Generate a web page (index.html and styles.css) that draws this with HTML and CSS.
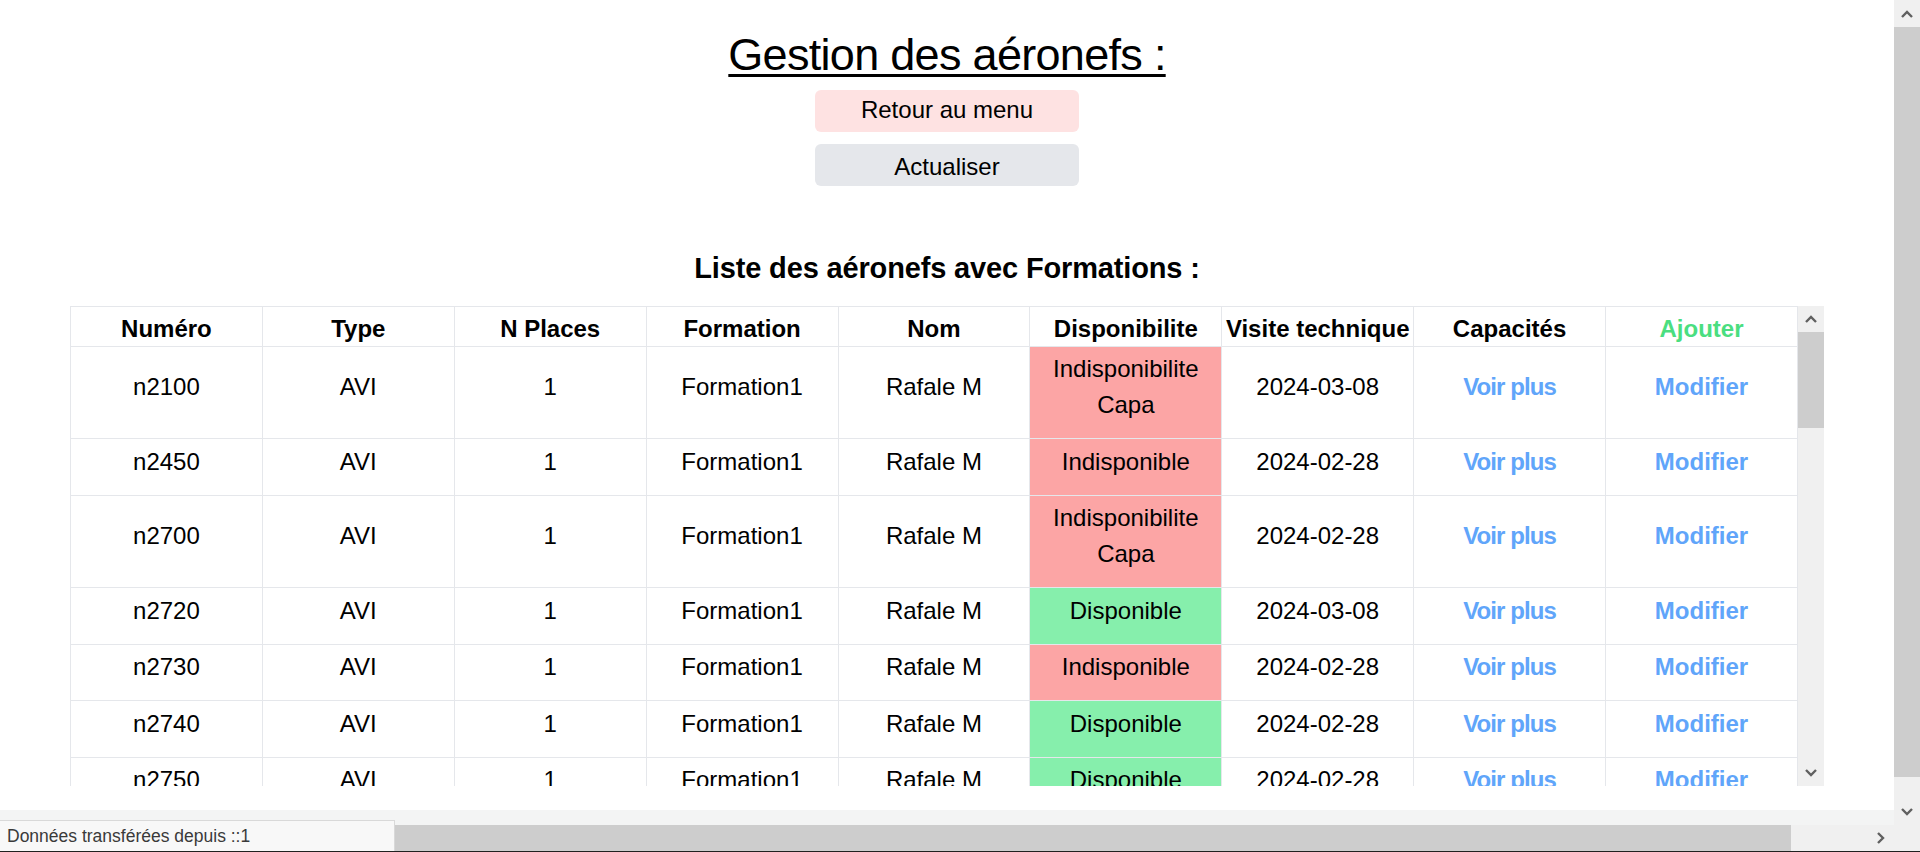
FILE: index.html
```html
<!DOCTYPE html>
<html lang="fr">
<head>
<meta charset="utf-8">
<title>Gestion des aéronefs</title>
<link rel="stylesheet" href="styles.css">
</head>
<body>
<div class="screen">
  <main class="viewport">
    <div class="page">
      <h1 class="title">Gestion des aéronefs :</h1>
      <div class="actions">
        <button class="btn btn-back" type="button">Retour au menu</button>
        <button class="btn btn-refresh" type="button">Actualiser</button>
      </div>
      <h2 class="subtitle">Liste des aéronefs avec Formations :</h2>
      <div class="table-frame">
        <div class="table-clip">
          <table class="grid">
            <thead>
              <tr>
                <th>Numéro</th><th>Type</th><th>N Places</th><th>Formation</th><th>Nom</th><th>Disponibilite</th><th>Visite technique</th><th>Capacités</th><th class="add">Ajouter</th>
              </tr>
            </thead>
            <tbody>
              <tr>
                <td>n2100</td><td>AVI</td><td>1</td><td>Formation1</td><td>Rafale M</td><td class="off">Indisponibilite Capa</td><td>2024-03-08</td><td class="link more">Voir plus</td><td class="link">Modifier</td>
              </tr>
              <tr>
                <td>n2450</td><td>AVI</td><td>1</td><td>Formation1</td><td>Rafale M</td><td class="off">Indisponible</td><td>2024-02-28</td><td class="link more">Voir plus</td><td class="link">Modifier</td>
              </tr>
              <tr>
                <td>n2700</td><td>AVI</td><td>1</td><td>Formation1</td><td>Rafale M</td><td class="off">Indisponibilite Capa</td><td>2024-02-28</td><td class="link more">Voir plus</td><td class="link">Modifier</td>
              </tr>
              <tr>
                <td>n2720</td><td>AVI</td><td>1</td><td>Formation1</td><td>Rafale M</td><td class="on">Disponible</td><td>2024-03-08</td><td class="link more">Voir plus</td><td class="link">Modifier</td>
              </tr>
              <tr>
                <td>n2730</td><td>AVI</td><td>1</td><td>Formation1</td><td>Rafale M</td><td class="off">Indisponible</td><td>2024-02-28</td><td class="link more">Voir plus</td><td class="link">Modifier</td>
              </tr>
              <tr>
                <td>n2740</td><td>AVI</td><td>1</td><td>Formation1</td><td>Rafale M</td><td class="on">Disponible</td><td>2024-02-28</td><td class="link more">Voir plus</td><td class="link">Modifier</td>
              </tr>
              <tr>
                <td>n2750</td><td>AVI</td><td>1</td><td>Formation1</td><td>Rafale M</td><td class="on">Disponible</td><td>2024-02-28</td><td class="link more">Voir plus</td><td class="link">Modifier</td>
              </tr>
            </tbody>
          </table>
        </div>
        <div class="vscroll vscroll-table">
          <div class="sb-btn"><svg width="12" height="8" viewBox="0 0 12 8"><path d="M1 7L6 2l5 5" fill="none" stroke="#606060" stroke-width="2.4"/></svg></div>
          <div class="sb-thumb thumb-table"></div>
          <div class="sb-track"></div>
          <div class="sb-btn"><svg width="12" height="8" viewBox="0 0 12 8"><path d="M1 1l5 5 5-5" fill="none" stroke="#606060" stroke-width="2.4"/></svg></div>
        </div>
      </div>
    </div>
    <div class="band"></div>
  </main>
  <div class="vscroll vscroll-page">
    <div class="sb-btn page-btn"><svg width="12" height="8" viewBox="0 0 12 8"><path d="M1 7L6 2l5 5" fill="none" stroke="#606060" stroke-width="2.4"/></svg></div>
    <div class="sb-thumb thumb-page"></div>
    <div class="sb-track"></div>
    <div class="sb-btn page-btn"><svg width="12" height="8" viewBox="0 0 12 8"><path d="M1 1l5 5 5-5" fill="none" stroke="#606060" stroke-width="2.4"/></svg></div>
  </div>
  <div class="hscroll">
    <div class="hsb-btn"><svg width="8" height="12" viewBox="0 0 8 12"><path d="M7 1L2 6l5 5" fill="none" stroke="#606060" stroke-width="2.4"/></svg></div>
    <div class="hsb-thumb"></div>
    <div class="hsb-track"></div>
    <div class="hsb-btn"><svg width="8" height="12" viewBox="0 0 8 12"><path d="M1 1l5 5-5 5" fill="none" stroke="#606060" stroke-width="2.4"/></svg></div>
  </div>
  <div class="corner"></div>
  <div class="bottom-line"></div>
</div>
<div class="status">Données transférées depuis ::1</div>
</body>
</html>
```

FILE: styles.css
```css
* { box-sizing: border-box; }

html, body {
  margin: 0;
  padding: 0;
  width: 1920px;
  height: 852px;
  overflow: hidden;
  background: #ffffff;
  font-family: "Liberation Sans", Arial, sans-serif;
  color: #000000;
}

.screen {
  display: grid;
  grid-template-columns: 1894px 26px;
  grid-template-rows: 825px 26px 1px;
  width: 1920px;
  height: 852px;
}

.viewport {
  grid-column: 1;
  grid-row: 1;
  display: flex;
  flex-direction: column;
  overflow: hidden;
  background: #ffffff;
}

.page {
  flex: 1;
  padding-top: 32px;
  display: flex;
  flex-direction: column;
  align-items: center;
}

.title {
  margin: 0;
  font-size: 45px;
  line-height: 45px;
  font-weight: 400;
  letter-spacing: -0.7px;
  text-decoration: underline;
  text-decoration-thickness: 3px;
  text-underline-offset: 4px;
}

.actions {
  margin-top: 13px;
  display: flex;
  flex-direction: column;
  gap: 12px;
}

.btn {
  width: 264px;
  height: 42px;
  border: none;
  border-radius: 6px;
  padding: 2px 0 4px;
  font-family: "Liberation Sans", Arial, sans-serif;
  font-size: 24px;
  line-height: 36px;
  color: #000000;
  text-align: center;
}

.btn-back { background: #fee2e2; }
.btn-refresh { background: #e5e7eb; padding: 5px 0 1px; }

.subtitle {
  margin: 61px 0 0;
  font-size: 29px;
  line-height: 43.5px;
  font-weight: 700;
  letter-spacing: -0.15px;
}

.table-frame {
  margin-top: 15.5px;
  width: 1754px;
  height: 480px;
  display: flex;
}

.table-clip {
  width: 1728px;
  height: 480px;
  overflow: hidden;
}

.grid {
  width: 1728px;
  table-layout: fixed;
  border-collapse: separate;
  border-spacing: 0;
  border-top: 1px solid #e5e7eb;
  border-left: 1px solid #e5e7eb;
  font-size: 24px;
}

.grid th,
.grid td {
  border-right: 1px solid #e5e7eb;
  border-bottom: 1px solid #e5e7eb;
  text-align: center;
  vertical-align: middle;
}

.grid th {
  font-weight: 700;
  line-height: 32px;
  padding: 5.7px 2px 1.3px;
  white-space: nowrap;
}

.grid th.add { color: #4ade80; }

.grid td {
  line-height: 36px;
  padding: 4.2px 3px 15.3px;
}

.grid td.off { background: #fca5a5; }
.grid td.on { background: #86efac; }
.grid td.link { color: #60a5fa; font-weight: 700; }
.grid td.more { letter-spacing: -0.9px; }

.vscroll {
  display: flex;
  flex-direction: column;
  background: #f0f0f0;
}

.vscroll-table {
  width: 26px;
  height: 480px;
}

.vscroll-page {
  grid-column: 2;
  grid-row: 1;
}

.sb-btn {
  height: 26px;
  flex: none;
  display: flex;
  align-items: center;
  justify-content: center;
}

.page-btn { height: 27px; }

.sb-thumb {
  flex: none;
  background: #cdcdcd;
}

.thumb-table { height: 96px; }
.thumb-page { height: 750px; }

.sb-track { flex: 1; }

.band {
  flex: none;
  height: 15px;
  background: #f3f4f4;
}

.hscroll {
  grid-column: 1;
  grid-row: 2;
  display: flex;
  background: #f0f0f0;
}

.hsb-btn {
  width: 26px;
  flex: none;
  display: flex;
  align-items: center;
  justify-content: center;
}

.hsb-thumb {
  width: 1765px;
  flex: none;
  background: #cdcdcd;
}

.hsb-track { flex: 1; }

.corner {
  grid-column: 2;
  grid-row: 2;
  background: #f0f0f0;
}

.bottom-line {
  grid-column: 1 / span 2;
  grid-row: 3;
  background: #202020;
}

.status {
  position: fixed;
  left: 0;
  bottom: 1px;
  width: 395px;
  height: 31px;
  padding-left: 7px;
  background: #f8f8f8;
  border-top: 1px solid #d9d9d9;
  border-right: 1px solid #d9d9d9;
  font-family: "Liberation Sans", Arial, sans-serif;
  font-size: 17.5px;
  line-height: 30px;
  color: #3a3a3a;
  white-space: nowrap;
}
```
